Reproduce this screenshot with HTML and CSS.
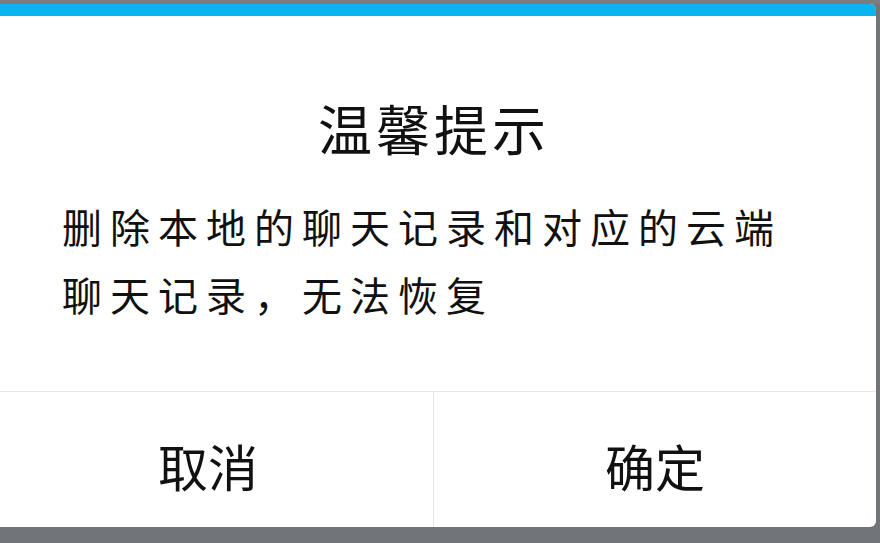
FILE: index.html
```html
<!DOCTYPE html>
<html lang="zh-CN">
<head>
<meta charset="utf-8">
<title>温馨提示</title>
<link rel="stylesheet" href="styles.css">
</head>
<body>
<div class="dialog">
  <div class="bar"></div>
  <div class="content">
    <div class="title">温馨提示</div>
    <div class="message">删除本地的聊天记录和对应的云端聊天记录，无法恢复</div>
  </div>
  <div class="actions">
    <div class="btn btn-cancel">取消</div>
    <div class="btn btn-ok">确定</div>
  </div>
</div>
</body>
</html>
```

FILE: styles.css
```css
html, body {
  margin: 0;
  padding: 0;
}
body {
  width: 880px;
  height: 543px;
  overflow: hidden;
  background: #71757a;
  border-top: 4px solid #7c7c7c;
  box-sizing: border-box;
  font-family: "Noto Sans CJK SC", "Noto Sans", sans-serif;
  color: #111;
}
.dialog {
  margin-left: -17px;
  width: 893px;
  height: 523px;
  background: #fff;
  border-radius: 6px;
  overflow: hidden;
  display: flex;
  flex-direction: column;
}
.bar {
  height: 12px;
  background: #0ab4ef;
  flex: none;
}
.content {
  flex: 1;
  padding: 82px 74px 0 79px;
}
.title {
  font-size: 54px;
  line-height: 60px;
  letter-spacing: 4px;
  text-align: center;
  padding-left: 4px;
}
.message {
  margin-top: 34px;
  font-size: 40px;
  line-height: 68px;
  letter-spacing: 8px;
}
.actions {
  flex: none;
  height: 135px;
  border-top: 1px solid #e6e6e6;
  display: flex;
}
.btn {
  display: flex;
  align-items: center;
  justify-content: center;
  font-size: 50px;
  padding-top: 11px;
  box-sizing: border-box;
}
.btn-cancel {
  width: 450px;
  flex: none;
}
.btn-ok {
  flex: 1;
  border-left: 1px solid #e6e6e6;
}
```
